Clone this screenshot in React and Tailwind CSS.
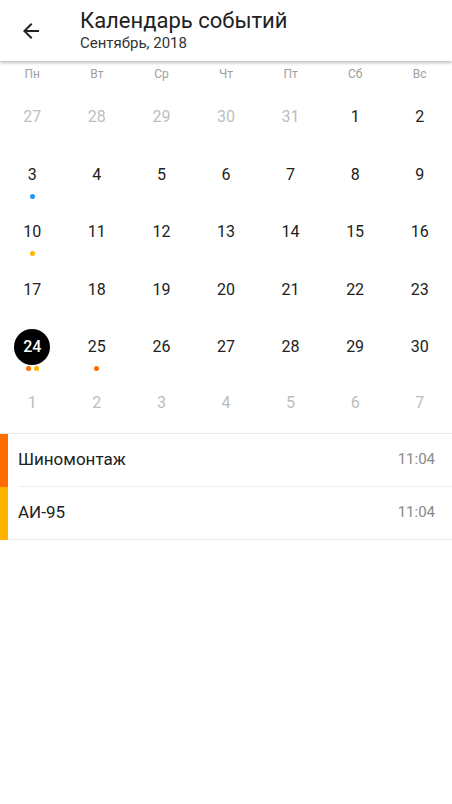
import React from 'react';

const weekdays = ['Пн', 'Вт', 'Ср', 'Чт', 'Пт', 'Сб', 'Вс'];

// dots: цвета событий по дню
const BLUE = 'bg-[#2196f3]';
const AMBER = 'bg-[#ffb300]';
const ORANGE = 'bg-[#ff6d00]';

const weeks = [
    [[27, true], [28, true], [29, true], [30, true], [31, true], [1], [2]],
    [[3, false, [BLUE]], [4], [5], [6], [7], [8], [9]],
    [[10, false, [AMBER]], [11], [12], [13], [14], [15], [16]],
    [[17], [18], [19], [20], [21], [22], [23]],
    [[24, false, [ORANGE, AMBER], true], [25, false, [ORANGE]], [26], [27], [28], [29], [30]],
];
const nextMonth = [1, 2, 3, 4, 5, 6, 7];

const events = [
    { title: 'Шиномонтаж', time: '11:04', color: 'bg-[#ff6d00]' },
    { title: 'АИ-95', time: '11:04', color: 'bg-[#ffb300]' },
];

function DayCell({ day, muted, dots = [], selected }) {
    return (
        <div className="h-[57.5px] flex flex-col items-center">
            <div className="h-[36px] w-[36px] mt-[1px] flex items-center justify-center">
                {selected ? (
                    <div className="w-[36px] h-[36px] rounded-full bg-black text-white font-medium text-[16px] flex items-center justify-center">
                        {day}
                    </div>
                ) : (
                    <span className={`text-[16px] ${muted ? 'text-[#bdbdbd]' : 'text-[#212121]'}`}>{day}</span>
                )}
            </div>
            <div className="flex gap-[3px] mt-[1px] h-[5px]">
                {dots.map((d, i) => (
                    <span key={i} className={`w-[5px] h-[5px] rounded-full ${d}`} />
                ))}
            </div>
        </div>
    );
}

export default function App() {
    return (
        <div className="w-[452px] h-[804px] bg-white overflow-hidden" style={{ fontFamily: 'Roboto, "Noto Sans", sans-serif' }}>
            {/* Шапка */}
            <div className="h-[61px] flex items-center relative z-10 shadow-[0_2px_3px_rgba(0,0,0,0.25)] bg-white">
                <div className="w-[80px] flex justify-center pr-[18px]">
                    <svg width="24" height="24" viewBox="0 0 24 24" className="text-[#212121]">
                        <path d="M20 11H7.83l5.59-5.59L12 4l-8 8 8 8 1.41-1.41L7.83 13H20v-2z" fill="currentColor" />
                    </svg>
                </div>
                <div className="flex flex-col -mt-[1px]">
                    <span className="text-[22px] leading-[26px] text-[#212121]">Календарь событий</span>
                    <span className="text-[15px] leading-[18px] text-[#333]">Сентябрь, 2018</span>
                </div>
            </div>

            {/* Дни недели */}
            <div className="grid grid-cols-7 h-[25px] items-center">
                {weekdays.map(w => (
                    <div key={w} className="text-center text-[12px] text-[#9e9e9e]">{w}</div>
                ))}
            </div>

            {/* Сетка дат */}
            <div className="pt-[12px]">
                {weeks.map((week, wi) => (
                    <div key={wi} className="grid grid-cols-7">
                        {week.map(([day, muted, dots, selected], di) => (
                            <DayCell key={di} day={day} muted={muted} dots={dots} selected={selected} />
                        ))}
                    </div>
                ))}
                <div className="grid grid-cols-7 h-[47px] items-start">
                    {nextMonth.map(d => (
                        <div key={d} className="text-center text-[16px] text-[#bdbdbd] pt-[5px]">{d}</div>
                    ))}
                </div>
            </div>

            {/* Список событий */}
            <div className="border-t border-[#e8e8e8]">
                {events.map((e, i) => (
                    <div key={i} className="flex h-[53px]">
                        <div className={`w-[8px] ${e.color}`} />
                        <div className={`flex-1 flex items-center ${i === events.length - 1 ? 'border-b border-[#e8e8e8]' : ''}`}>
                            <div className={`flex-1 h-full flex items-center justify-between ml-[10px] pr-[17px] ${i < events.length - 1 ? 'border-b border-[#eeeeee]' : ''}`}>
                                <span className="text-[17px] text-[#212121]">{e.title}</span>
                                <span className="text-[15px] text-[#8a8a8a]">{e.time}</span>
                            </div>
                        </div>
                    </div>
                ))}
            </div>
        </div>
    );
}
